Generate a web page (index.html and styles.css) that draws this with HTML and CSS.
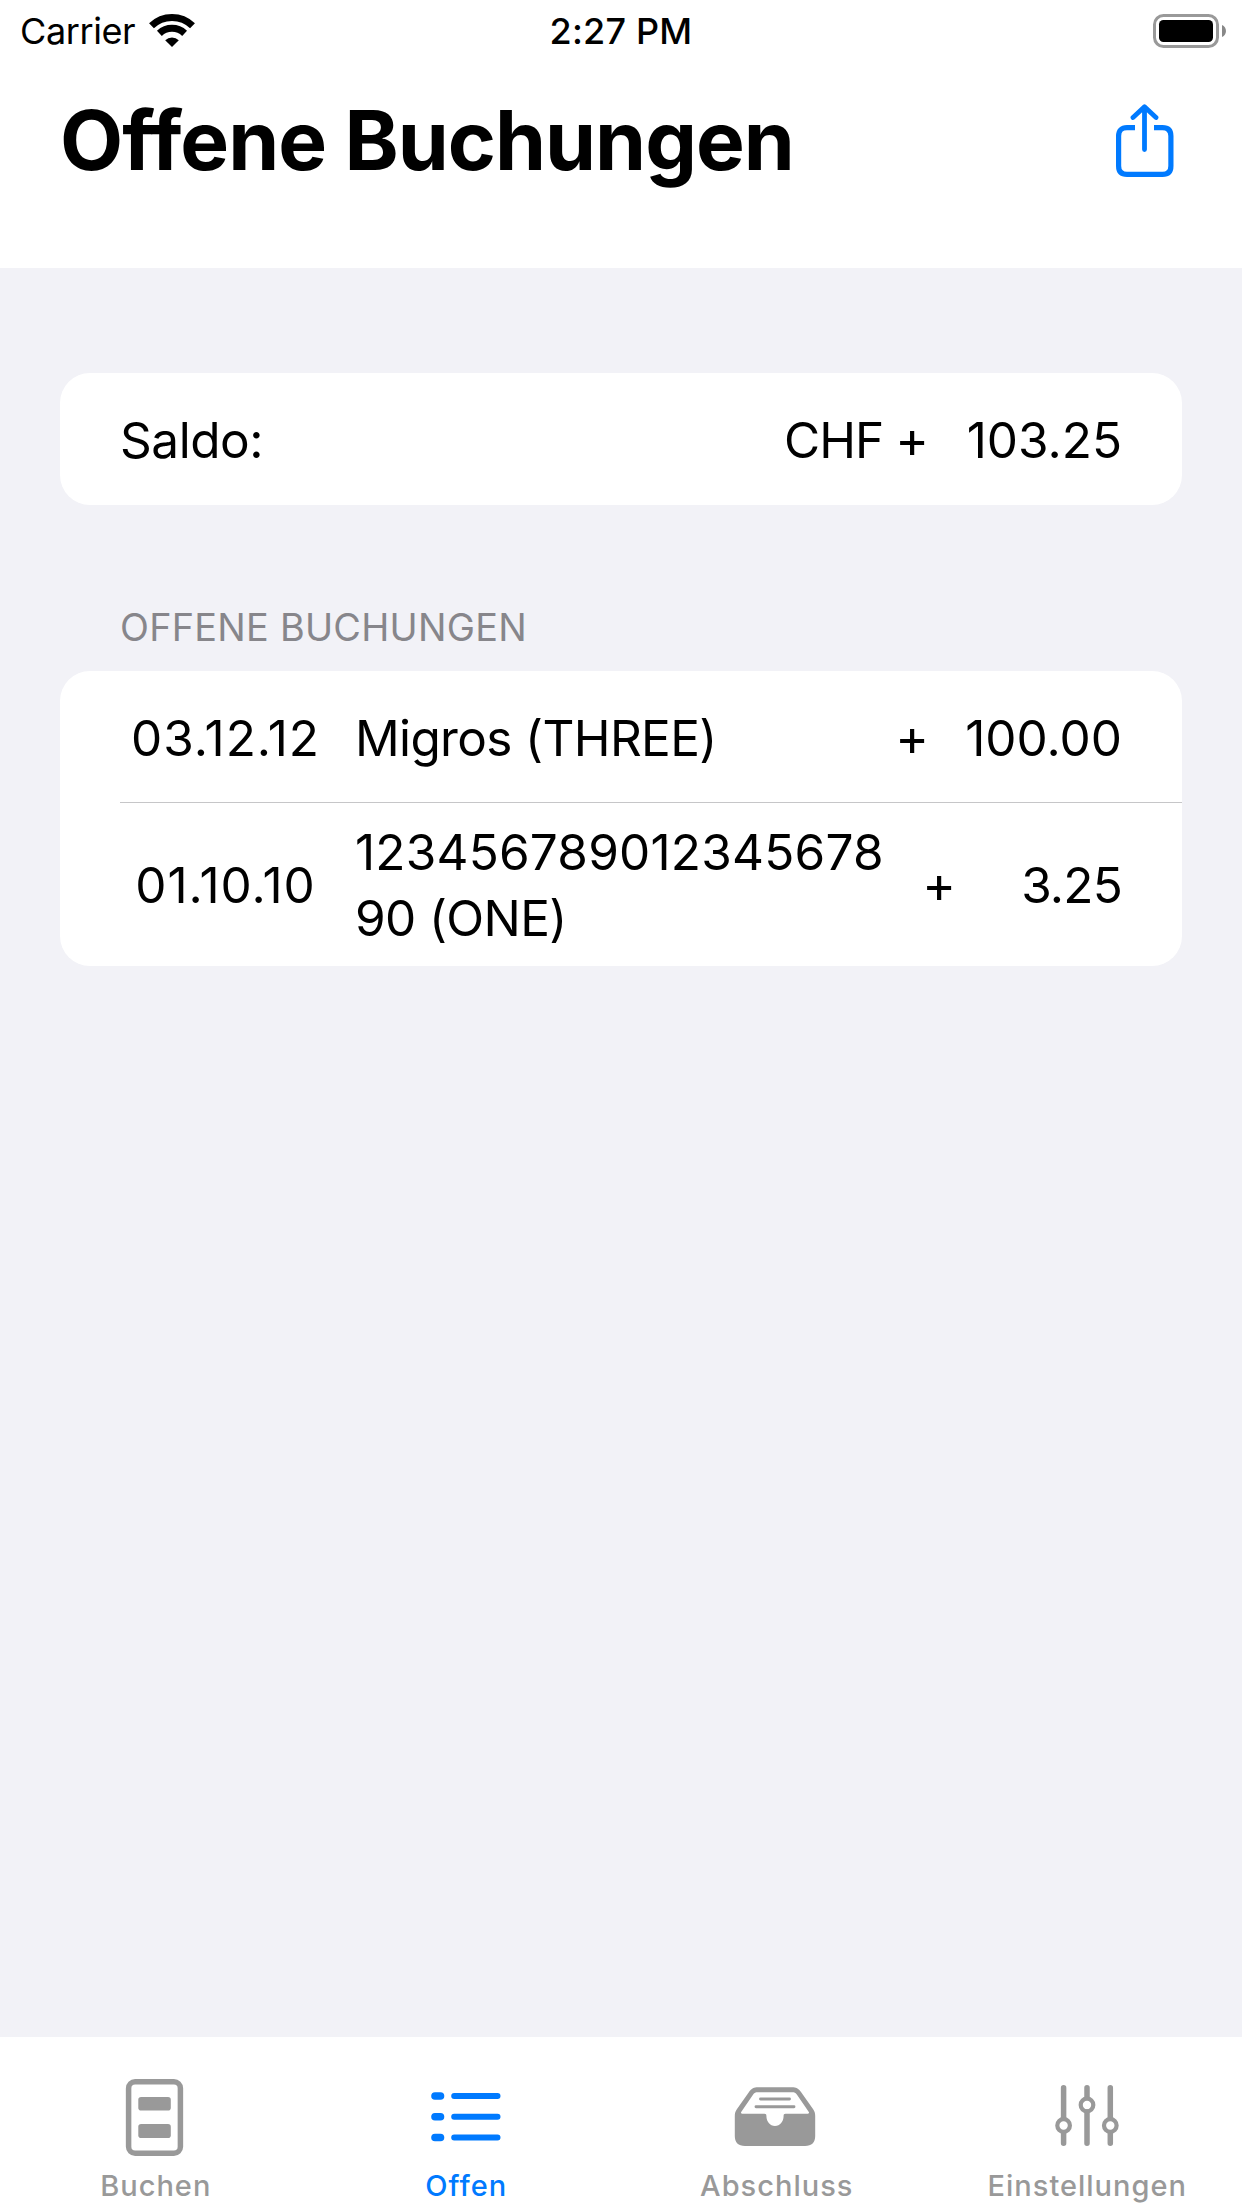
FILE: index.html
```html
<!DOCTYPE html>
<html lang="de">
<head>
  <meta charset="UTF-8" />
  <meta name="viewport" content="width=device-width, initial-scale=1.0"/>
  <title>Offene Buchungen</title>
  <link rel="stylesheet" href="styles.css">
</head>
<body>
  <div class="app">
    <header class="header">
      <!-- Statusleiste -->
      <div class="status-bar">
        <div class="status-left">
          <span class="carrier">Carrier</span>
          <svg class="wifi" width="46" height="34" viewBox="0 0 46 34">
            <g fill="none" stroke="#000" stroke-width="7">
              <path d="M2.5 11.8A29.5 29.5 0 0 1 43.5 11.8" />
              <path d="M10.4 19.4A18.3 18.3 0 0 1 35.6 19.4" />
            </g>
            <path d="M16.2 26.2A10 10 0 0 1 29.8 26.2L23 33Z" />
          </svg>
        </div>
        <span class="time">2:27 PM</span>
        <svg class="battery" width="73" height="34" viewBox="0 0 73 34">
          <rect x="1.5" y="1.5" width="63" height="31" rx="9" fill="none" stroke="#999" stroke-width="3" />
          <rect x="6" y="6" width="54" height="22" rx="4.5" />
          <path d="M69 11C74.300 13 74.300 21 69 23Z" fill="#888" />
        </svg>
      </div>

      <!-- Titel -->
      <div class="title-bar">
        <h1>Offene Buchungen</h1>
        <svg class="share" width="58" height="74" viewBox="0 0 58 74">
          <g fill="none" stroke="#007aff" stroke-width="5.2">
            <path d="M19 23.600H11C5.500 23.600 2.600 26.500 2.600 32V62C2.600 67.500 5.500 70.400 11 70.400H46.500C52 70.400 54.900 67.500 54.900 62V32C54.900 26.500 52 23.600 46.500 23.600H38" />
            <path d="M28.500 3V45.500M17 13.500L28.500 2.800L40 13.500" stroke-width="4.800" stroke-linecap="round" stroke-linejoin="round" />
          </g>
        </svg>
      </div>
    </header>

    <main class="content">
      <section class="card">
        <div class="row">
          <span class="label">Saldo:</span>
          <span class="currency">CHF</span>
          <span class="sign">+</span>
          <span class="amount">103.25</span>
        </div>
      </section>

      <h2>OFFENE BUCHUNGEN</h2>

      <!-- Buchungen -->
      <section class="card">
        <div class="row">
          <span class="date">03.12.12</span>
          <span class="text">Migros (THREE)</span>
          <span class="sign">+</span>
          <span class="amount">100.00</span>
        </div>
        <div class="divider"></div>
        <div class="row row-tall">
          <span class="date">01.10.10</span>
          <span class="text"><span class="digits">123456789012345678</span><br>90 (ONE)</span>
          <span class="sign">+</span>
          <span class="amount amount-small">3.25</span>
        </div>
      </section>
    </main>

    <nav class="tab-bar">
      <a class="tab">
        <svg width="90" height="90" viewBox="0 0 90 90">
          <rect x="18.600" y="9.700" width="51.800" height="71.600" rx="6.500" fill="none" stroke="currentColor" stroke-width="5.500" />
          <rect x="28.300" y="25" width="32.500" height="13.500" rx="2.800" fill="currentColor" />
          <rect x="28.300" y="52" width="32.500" height="14" rx="2.800" fill="currentColor" />
        </svg>
        <span class="tab-label">Buchen</span>
      </a>
      <a class="tab active">
        <svg width="90" height="90" viewBox="0 0 90 90">
          <g fill="none" stroke="currentColor" stroke-linecap="round">
            <path d="M14 24H19.500M14 44.700H19.500M14 65.500H19.500" stroke-width="7.600" />
            <path d="M33.200 24H76.500M33.200 44.700H76.500M33.200 65.500H76.500" stroke-width="6" />
          </g>
        </svg>
        <span class="tab-label">Offen</span>
      </a>
      <a class="tab">
        <svg width="90" height="90" viewBox="0 0 90 90">
          <path fill="currentColor" fill-rule="evenodd" d="M27 15.300H61C65 15.300 67.500 16.500 70 20L82 37C83.600 39.400 84.200 41 84.200 44V64C84.200 70.500 80.800 74 74 74H14C7.200 74 3.800 70.500 3.800 64V44C3.800 41 4.400 39.400 6 37L18 20C20.500 16.500 23 15.300 27 15.300ZM27 20.200C24.500 20.200 23.300 20.800 22 22.800L10.200 40C9.700 41 10 41.700 11 41.700H33.500C35 41.700 35.400 42.500 35.400 44C35.400 49.500 39 54 44 54C49 54 52.600 49.500 52.600 44C52.600 42.500 53 41.700 54.500 41.700H77C78 41.700 78.300 41 77.800 40L66 22.800C64.700 20.800 63.500 20.200 61 20.200Z" />
          <path d="M29.500 27H58.500M25 34.700H63" fill="none" stroke="currentColor" stroke-width="2.900" stroke-linecap="round" />
        </svg>
        <span class="tab-label">Abschluss</span>
      </a>
      <a class="tab">
        <svg width="90" height="90" viewBox="0 0 90 90">
          <g fill="none" stroke="currentColor" stroke-width="5.500" stroke-linecap="round">
            <path d="M21.600 15.800V46M21.600 61V71.200M45 15.800V25M45 40V71.200M68.300 15.800V46M68.300 61V71.200" />
            <g stroke-width="4.200">
              <circle cx="21.600" cy="53.500" r="6.300" />
              <circle cx="45" cy="33" r="6.300" />
              <circle cx="68.300" cy="53.500" r="6.300" />
            </g>
          </g>
        </svg>
        <span class="tab-label">Einstellungen</span>
      </a>
    </nav>
  </div>
</body>
</html>
```
FILE: styles.css
```css
* {
  box-sizing: border-box;
}

body {
  margin: 0;
  font-family: Inter, "Liberation Sans", sans-serif;
  font-size: 49.5px;
  color: #000;
  background: #f2f2f7;
}

svg {
  display: block;
  flex-shrink: 0;
}

.app {
  display: flex;
  flex-direction: column;
  height: 2208px;
}

.header {
  height: 268px;
  background: #fff;
}

.status-bar {
  display: grid;
  grid-template-columns: 1fr auto 1fr;
  align-items: center;
  height: 60px;
  padding: 0 16px 0 20px;
  font-size: 36px;
  line-height: 62px;
}

.status-left {
  display: flex;
  align-items: center;
  gap: 14px;
}

.carrier {
  letter-spacing: -0.4px;
}

.time {
  margin: 0 2px 0 -2px;
  font-weight: 500;
  letter-spacing: 0.2px;
}

.battery {
  justify-self: end;
}

.title-bar {
  display: flex;
  justify-content: space-between;
  align-items: flex-start;
  padding: 40px 68px 0 60px;
}

h1 {
  margin: 0;
  font-size: 82px;
  line-height: 81px;
  font-weight: 700;
  font-variant-ligatures: none;
  font-feature-settings: "calt" 0;
  letter-spacing: -1px;
}

.share {
  margin-top: 4px;
}

.content {
  flex: 1;
  padding: 105px 60px 0;
}

.card {
  background: #fff;
  border-radius: 30px;
}

.row {
  display: flex;
  align-items: center;
  height: 132px;
  padding: 2px 60px 0;
  line-height: 66px;
}

.row-tall {
  height: 163px;
  padding-top: 0;
}

.label {
  flex: 1;
  letter-spacing: -0.45px;
}

.currency {
  margin-right: 12px;
  letter-spacing: -1px;
}

.sign {
  font-size: 51px;
}

.amount {
  width: 193px;
  text-align: right;
}

.amount-small {
  width: 166px;
  letter-spacing: -0.8px;
}

.date {
  width: 211px;
  margin-right: 24px;
  text-align: center;
  letter-spacing: 0.95px;
}

.text {
  flex: 1;
  white-space: nowrap;
  letter-spacing: -0.65px;
}

.digits {
  letter-spacing: 0.2px;
}

.divider {
  height: 1px;
  margin: -1px 0 0 60px;
  background: #c6c6c8;
}

h2 {
  margin: 0;
  padding: 92px 60px 14px;
  font-size: 37.8px;
  line-height: 60px;
  font-weight: 400;
  letter-spacing: 0.27px;
  color: #87868b;
}

.tab-bar {
  display: flex;
  height: 171px;
  background: #fff;
  color: #999;
}

.tab {
  flex: 1;
  display: flex;
  flex-direction: column;
  align-items: center;
  padding-top: 35px;
}

.tab-label {
  font-size: 29px;
  line-height: 40px;
  font-weight: 500;
  letter-spacing: 1px;
  margin: 4px 0 0 1px;
}

.active {
  color: #007aff;
}
```
